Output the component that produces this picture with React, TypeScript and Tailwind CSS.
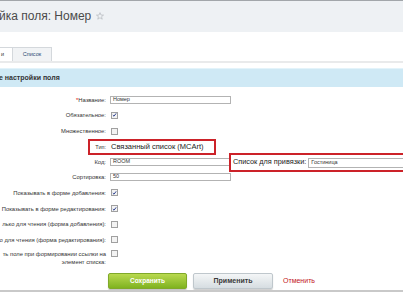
import React from "react";

function Check({ checked }: { checked?: boolean }) {
  return (
    <span className="w-[7px] h-[7px] border border-[#a0a0a0] bg-[#f3f3f3] flex items-center justify-center">
      {checked && (
        <svg viewBox="0 0 7 7" className="w-[6px] h-[6px]">
          <path d="M1.2 3.6 L2.8 5.2 L5.8 1.2" stroke="#23388a" strokeWidth="1.3" fill="none" />
        </svg>
      )}
    </span>
  );
}

function Input({ value }: { value: string }) {
  return (
    <div className="w-[121px] h-[8px] border border-[#b3b3b3] bg-white text-[5.5px] leading-none pl-[2px] flex items-center text-[#333]">
      {value}
    </div>
  );
}

function Row({ label, cls, children }: { label: React.ReactNode; cls: string; children?: React.ReactNode }) {
  return (
    <div className={"flex " + cls}>
      <div className="w-[106px] shrink-0 flex justify-end text-right text-[5.85px] leading-[8px] text-[#333]">
        <div className="shrink-0">{label}</div>
      </div>
      <div className="pl-[4px] flex items-center">{children}</div>
    </div>
  );
}

export default function App() {
  return (
    <div className="w-[403px] h-[294px] overflow-hidden bg-white font-['Liberation_Sans',Arial,sans-serif] flex flex-col">
      <div className="h-px bg-[#a2a6aa] shrink-0" />
      <div className="h-[31px] shrink-0 bg-[#eef1f4] flex items-center text-[12px] text-[#4a4a4a] pb-[2px]">
        <span className="-ml-[1px]">йка поля: Номер</span>
        <svg viewBox="0 0 10 10" className="w-[8px] h-[8px] ml-[5px]">
          <path d="M5 0.8 L6.2 3.8 L9.4 3.9 L6.9 5.9 L7.8 9 L5 7.2 L2.2 9 L3.1 5.9 L0.6 3.9 L3.8 3.8 Z" fill="none" stroke="#b0b4b8" strokeWidth="0.8" />
        </svg>
      </div>
      <div className="h-[15px] shrink-0" />
      <div className="h-[14px] shrink-0 flex items-stretch">
        <div className="w-[13px] border-t border-r border-[#d4d8dc] bg-white text-[5.5px] text-[#333] flex items-center pl-[1px]">
          и
        </div>
        <div className="w-[39px] border-t border-r border-[#d4d8dc] bg-[#f1f3f5] text-[5.5px] text-[#2d4a73] flex items-center justify-center">
          Список
        </div>
      </div>
      <div className="h-[2px] shrink-0 bg-[#e9eaeb]" />
      <div className="h-[5px] shrink-0" />
      <div className="h-[19px] shrink-0 bg-[#cfe9f5] border-t border-[#e3f3fa] flex items-center text-[7px] font-bold text-[#333]">
        <span className="-ml-[1px]">е настройки поля</span>
      </div>
      <div className="h-[5px] shrink-0" />
      <div className="flex flex-col">
        <Row label={<><span className="text-[#d00]">*</span>Название:</>} cls="h-[15px] items-center">
          <Input value="Номер" />
        </Row>
        <Row label="Обязательное:" cls="h-[16px] items-center">
          <span className="ml-[1px]"><Check checked /></span>
        </Row>
        <Row label="Множественное:" cls="h-[16px] items-center">
          <span className="ml-[1px]"><Check /></span>
        </Row>
        <div className="h-[16px] flex">
          <div className="ml-[88px] w-[128px] h-[16px] border-2 border-[#cc2229] flex items-center">
            <div className="w-[16px] text-right text-[5.5px] text-[#333]">Тип:</div>
            <div className="pl-[5px] text-[7.5px] text-[#222] whitespace-nowrap">Связанный список (MCArt)</div>
          </div>
        </div>
        <div className="relative">
          <Row label="Код:" cls="h-[14px] items-center">
            <Input value="ROOM" />
          </Row>
          <div className="absolute left-[229px] -top-[2px] w-[190px] h-[19px] border-2 border-[#cc2229] bg-white flex items-center">
            <span className="pl-[2px] text-[7.3px] text-[#222] whitespace-nowrap">Список для привязки:</span>
            <div className="ml-[2px] flex-1 h-[10px] border border-[#b3b3b3] text-[5.5px] pl-[2px] flex items-center text-[#333]">
              Гостиница
            </div>
          </div>
        </div>
        <Row label="Сортировка:" cls="h-[15px] items-center">
          <Input value="50" />
        </Row>
        <Row label="Показывать в форме добавления:" cls="h-[17px] items-center">
          <span className="ml-[1px]"><Check checked /></span>
        </Row>
        <Row label={<span className="whitespace-nowrap">Показывать в форме редактирования:</span>} cls="h-[15px] items-center">
          <span className="ml-[1px]"><Check checked /></span>
        </Row>
        <Row label={<span className="whitespace-nowrap">лько для чтения (форма добавления):</span>} cls="h-[16px] items-center">
          <span className="ml-[1px]"><Check /></span>
        </Row>
        <Row label={<span className="whitespace-nowrap">о для чтения (форма редактирования):</span>} cls="h-[15px] items-center">
          <span className="ml-[1px]"><Check /></span>
        </Row>
        <Row
          label={
            <>
              <span className="whitespace-nowrap">ть поле при формировании ссылки на</span>
              <br />
              элемент списка:
            </>
          }
          cls="h-[26px] items-start pt-[3px]"
        >
          <span className="ml-[1px]"><Check /></span>
        </Row>
        <div className="ml-[108px] flex items-center gap-[6px] h-[16px]">
          <div className="w-[79px] h-[16px] rounded-[2px] border border-[#80a92a] bg-gradient-to-b from-[#b9d94e] to-[#7fb31e] text-white text-[6.5px] font-bold flex items-center justify-center shadow-[0_1px_1px_rgba(0,0,0,0.25)]">
            Сохранить
          </div>
          <div className="w-[80px] h-[16px] rounded-[2px] border border-[#bfc7cc] bg-gradient-to-b from-[#f4f6f7] to-[#d6dde1] text-[#3a3a3a] text-[7px] font-bold flex items-center justify-center shadow-[0_1px_1px_rgba(0,0,0,0.2)]">
            Применить
          </div>
          <span className="ml-[4px] text-[7px] text-[#c2161e]">Отменить</span>
        </div>
        <div className="h-px" />
        <div className="h-[2px] bg-[#c9c9c9]" />
      </div>
    </div>
  );
}
